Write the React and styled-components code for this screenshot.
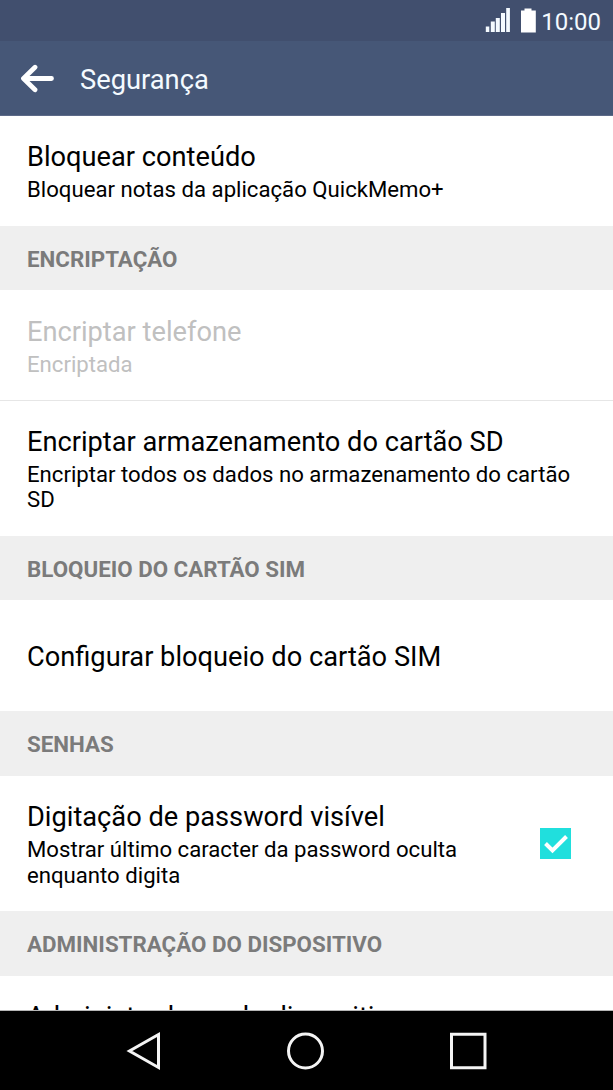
import React from "react";
import styled, { createGlobalStyle } from "styled-components";

const GlobalStyle = createGlobalStyle`
  * {
    box-sizing: border-box;
  }
  body {
    margin: 0;
    background: #fff;
  }
`;
const Screen = styled.div`
  display: flex;
  flex-direction: column;
  width: 613px;
  height: 1090px;
  overflow: hidden;
  background: #fff;
  color: #000;
  font-family: Roboto, sans-serif;
`;
const StatusBar = styled.div`
  display: flex;
  flex: none;
  justify-content: flex-end;
  height: 41px;
  padding: 8px 12px 0 0;
  background: #414f6e;
`;
const Clock = styled.span`
  margin-left: 4px;
  color: #f4faff;
  font-size: 24px;
  line-height: 28px;
`;
const AppBar = styled.div`
  display: flex;
  flex: none;
  align-items: center;
  height: 75px;
  padding-left: 20px;
  background: #465777;
  border-bottom: 1px solid #5d6a88;
`;
const AppTitle = styled.h1`
  margin: 4px 0 0 25px;
  color: #f4faff;
  font-size: 27.3px;
  font-weight: 400;
  line-height: 32px;
`;
const List = styled.div`
  flex: 1;
  min-height: 0;
  overflow: hidden;
  border-bottom: 1px solid #b5b5b5;
`;
const Header = styled.h2`
  height: ${(props) => props.$height}px;
  margin: 0;
  padding-left: 27px;
  background: #efefef;
  color: #7b7b7b;
  font-size: 22.33px;
  font-weight: 700;
  line-height: 67px;
`;
const Item = styled.div`
  display: flex;
  align-items: center;
  justify-content: space-between;
  height: ${(props) => props.$height}px;
  padding: ${(props) => (props.$disabled ? 3 : 2)}px 42px 0 27px;
  border-bottom: ${(props) => (props.$divider ? "1px solid #e6e6e6" : "none")};
  color: ${(props) => (props.$disabled ? "#c0c0c0" : "#000")};
`;
const Texts = styled.div`
  width: ${(props) => (props.$narrow ? "450px" : "auto")};
  padding-top: ${(props) => (props.$narrow ? "0.4px" : "0")};
`;
const Title = styled.div`
  font-size: 27.23px;
  line-height: 32px;
  white-space: nowrap;
`;
const Summary = styled.div`
  margin-top: ${(props) => (props.$loose ? 3.6 : 4)}px;
  font-size: 22.17px;
  line-height: ${(props) => (props.$loose ? 26 : 25.7)}px;
  white-space: nowrap;
`;
const CheckIcon = styled.svg`
  flex: none;
  margin-bottom: 2px;
`;
const NavBar = styled.div`
  display: flex;
  flex: none;
  height: 79px;
  background: #000;
`;

const Signal = () => (
  <svg width="26" height="26" viewBox="0 0 26 26" fill="#f4faff">
    <path d="M0.800 18.500h3.500v5.500H0.800zM5.800 13.500h4v10.500h-4zM10.800 10h4v14h-4zM16 5h4v19h-4zM21.200 0h3.700v24h-3.700z" />
  </svg>
);

const Battery = () => (
  <svg width="26" height="26" viewBox="0 0 26 26" fill="#fff">
    <path d="M13.500 2.500V0.500h7v2h4.300V24.500H10V2.500z" />
  </svg>
);

const Back = () => (
  <svg width="35" height="30" viewBox="0 0 35 30" fill="none" stroke="#fff">
    <path
      d="M31.500 15.500H4M15 4.200L3.500 15.500l11.500 11.300"
      strokeWidth="4.800"
      strokeLinecap="round"
      strokeLinejoin="round"
    />
  </svg>
);

const Checkbox = () => (
  <CheckIcon width="31" height="31" viewBox="0 0 31 31">
    <path d="M0 0h31v31H0z" fill="#20dfdd" />
    <path d="M5.500 15.500l7 7L26.500 8.500" fill="none" stroke="#fff" strokeWidth="4" />
  </CheckIcon>
);

const NavIcons = () => (
  <svg width="613" height="79" viewBox="0 0 613 79" fill="none" stroke="#f4f4f4">
    <path d="M158.500 23.500L129.500 40l29 16.500z" strokeWidth="3" />
    <circle cx="305.500" cy="40" r="17" strokeWidth="3" />
    <path d="M451.500 23.300h33.500v33.500h-33.500z" strokeWidth="3" />
  </svg>
);

export default class App extends React.Component {
  render() {
    return (
      <Screen>
        <GlobalStyle />
        <StatusBar>
          <Signal />
          <Battery />
          <Clock>10:00</Clock>
        </StatusBar>
        <AppBar>
          <Back />
          <AppTitle>Segurança</AppTitle>
        </AppBar>
        <List>
          <Item $height={110}>
            <Texts>
              <Title>Bloquear conteúdo</Title>
              <Summary>Bloquear notas da aplicação QuickMemo+</Summary>
            </Texts>
          </Item>
          <Header $height={64.4}>ENCRIPTAÇÃO</Header>
          <Item $height={110.6} $divider $disabled>
            <Texts>
              <Title>Encriptar telefone</Title>
              <Summary>Encriptada</Summary>
            </Texts>
          </Item>
          <Item $height={135}>
            <Texts>
              <Title>Encriptar armazenamento do cartão SD</Title>
              <Summary>
                Encriptar todos os dados no armazenamento do cartão
                <br />
                SD
              </Summary>
            </Texts>
          </Item>
          <Header $height={64.4}>BLOQUEIO DO CARTÃO SIM</Header>
          <Item $height={110.6}>
            <Title>Configurar bloqueio do cartão SIM</Title>
          </Item>
          <Header $height={65}>SENHAS</Header>
          <Item $height={135}>
            <Texts $narrow>
              <Title>Digitação de password visível</Title>
              <Summary $loose>
                Mostrar último caracter da password oculta
                <br />
                enquanto digita
              </Summary>
            </Texts>
            <Checkbox />
          </Item>
          <Header $height={65}>ADMINISTRAÇÃO DO DISPOSITIVO</Header>
          <Item $height={110}>
            <Texts>
              <Title>Administradores do dispositivo</Title>
              <Summary>Ver ou desativar administradores</Summary>
            </Texts>
          </Item>
        </List>
        <NavBar>
          <NavIcons />
        </NavBar>
      </Screen>
    );
  }
}
